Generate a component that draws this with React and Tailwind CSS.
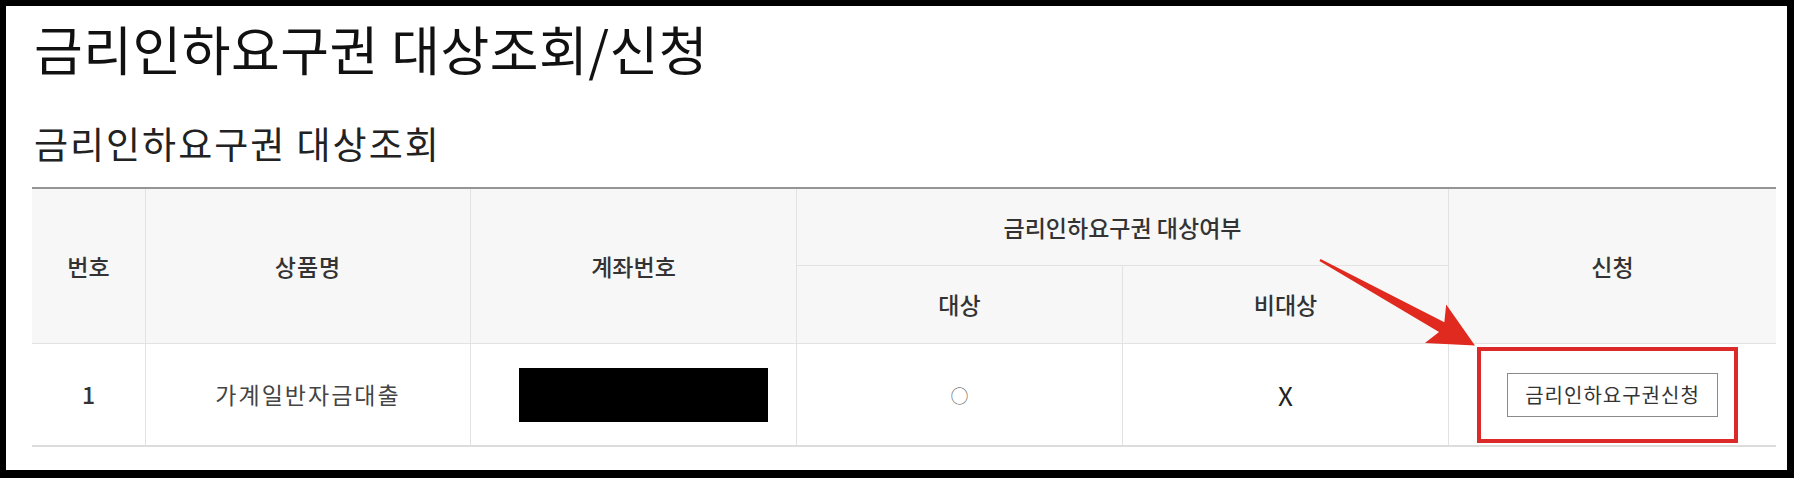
import React from "react";

export default function App() {
  const th = "flex items-center justify-center bg-[#f7f7f7] text-[#333] text-[23px] font-medium border-[#e2e2e2]";
  const td = "flex items-center justify-center bg-white border-[#e2e2e2]";
  return (
    <div className="relative w-[1794px] h-[478px] bg-black pt-[6px] pl-[6px] overflow-hidden font-['Noto_Sans_CJK_KR','Noto_Sans',sans-serif]">
      <div className="w-[1781px] h-[464px] bg-white pl-[26px] pr-[11px] pt-[16px]">
        <h1 className="pl-[2px] text-[53px] leading-[53px] font-normal text-[#111] tracking-[0.5px]">
          금리인하요구권 대상조회/신청
        </h1>
        <h2 className="mt-[50px] pl-[2px] text-[37px] leading-[37px] font-normal text-[#222] tracking-[2px]">
          금리인하요구권 대상조회
        </h2>
        <div className="mt-[25px] w-[1744px] border-t-2 border-[#959595] border-b-2 border-b-[#dcdcdc]">
          <div className="grid grid-cols-[114px_325px_326px_326px_326px_327px] grid-rows-[77px_78px_101px]">
            <div className={`${th} row-span-2 border-r border-b`}>번호</div>
            <div className={`${th} row-span-2 border-r border-b tracking-[1px]`}>상품명</div>
            <div className={`${th} row-span-2 border-r border-b`}>계좌번호</div>
            <div className={`${th} col-span-2 border-r border-b`}>금리인하요구권 대상여부</div>
            <div className={`${th} row-span-2 border-b`}>신청</div>
            <div className={`${th} border-r border-b`}>대상</div>
            <div className={`${th} border-r border-b`}>비대상</div>

            <div className={`${td} border-r font-medium text-[23px] text-[#333]`}>1</div>
            <div className={`${td} border-r text-[23px] text-[#444] tracking-[2px]`}>가계일반자금대출</div>
            <div className={`${td} border-r`}>
              <div className="ml-[19px] w-[249px] h-[54px] bg-black" />
            </div>
            <div className={`${td} border-r`}>
              <span className="text-[18px] leading-none text-[#777]">○</span>
            </div>
            <div className={`${td} border-r`}>
              <span className="text-[26px] text-[#222]">X</span>
            </div>
            <div className={`${td}`}>
              <button className="w-[211px] h-[44px] border border-[#8a8a8a] bg-white text-[20px] text-[#333] leading-none tracking-[1px]">
                금리인하요구권신청
              </button>
            </div>
          </div>
        </div>
      </div>

      {/* annotation: red highlight box */}
      <div className="absolute left-[1477px] top-[347px] w-[261px] h-[96px] border-4 border-[#dc2a2a] pointer-events-none" />

      {/* annotation: arrow */}
      <svg className="absolute left-0 top-0 pointer-events-none" width="1794" height="478" viewBox="0 0 1794 478">
        <g transform="translate(1320 260) rotate(28.9)">
          <polygon points="0,-1.2 139,-5.5 132,-22 177,0 132,22 139,5.5 0,1.2" fill="#e0291f" />
        </g>
      </svg>
    </div>
  );
}
